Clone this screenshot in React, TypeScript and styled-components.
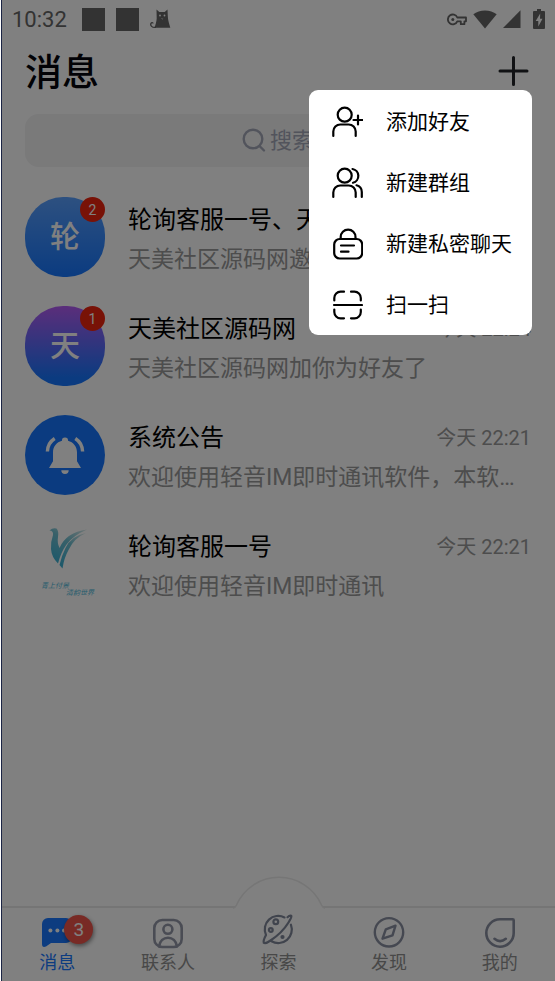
import React from 'react';
import styled, { createGlobalStyle } from 'styled-components';

const GlobalStyle = createGlobalStyle`
  *, *::before, *::after { box-sizing: border-box; }
  body {
    margin: 0;
    background: #fff;
    font-family: Roboto, "Noto Sans CJK SC", sans-serif;
  }
  button, input { font: inherit; color: inherit; }
  button { border: 0; padding: 0; background: none; cursor: pointer; }
`;

const Page = styled.div`
  position: relative;
  display: flex;
  flex-direction: column;
  min-height: 100vh;
  margin-left: 1px;
  border-left: 1px solid #1b2444;
  background: #fff;
`;

const StatusBar = styled.div`
  display: flex;
  align-items: center;
  justify-content: space-between;
  height: 38px;
  padding: 0 10px;
  color: #666;
`;

const StatusGroup = styled.div<{ $gap: number }>`
  display: flex;
  align-items: center;
  gap: ${(p) => p.$gap}px;
`;

const Clock = styled.span`
  margin-right: 4px;
  padding-top: 2px;
  font-size: 22px;
  line-height: 26px;
`;

const Square = styled.span`
  width: 23px;
  height: 23px;
  background: #666;
`;

const Header = styled.header`
  display: flex;
  align-items: center;
  justify-content: space-between;
  height: 68px;
  padding: 0 24px 2px 23px;
`;

const Heading = styled.h1`
  margin: 0;
  padding-top: 6px;
  font-size: 37px;
  line-height: 48px;
  font-weight: 500;
  color: #05050c;
`;

const AddButton = styled.button`
  display: flex;
  padding: 2px;
  color: #222428;
`;

const SearchBox = styled.label`
  display: flex;
  align-items: center;
  justify-content: center;
  gap: 4px;
  height: 53px;
  margin: 8px 24px 30px 23px;
  border-radius: 14px;
  background: #f3f3f4;
  color: #a4a8b8;
`;

const SearchInput = styled.input`
  width: 44px;
  height: 32px;
  padding: 0;
  border: 0;
  outline: 0;
  background: transparent;
  font-size: 22px;
  &::placeholder { color: #a4a8b8; opacity: 1; }
`;

const List = styled.ul`
  flex: 1;
  display: flex;
  flex-direction: column;
  gap: 29px;
  margin: 0;
  padding: 0 24px 24px 23px;
  list-style: none;
`;

const Row = styled.li`
  display: flex;
  gap: 23px;
`;

const Avatar = styled.div<{ $fill: string; $radius: number }>`
  position: relative;
  flex: none;
  display: flex;
  align-items: center;
  justify-content: center;
  width: 80px;
  height: 80px;
  border-radius: ${(p) => p.$radius}px;
  background: ${(p) => p.$fill};
  color: #fff;
  font-size: 30px;
  line-height: 40px;
  font-weight: 500;
`;

const UnreadBadge = styled.span`
  position: absolute;
  top: 0;
  right: 0;
  width: 25px;
  height: 25px;
  border-radius: 50%;
  background: #f0240f;
  font-size: 14px;
  line-height: 26px;
  font-weight: 400;
  text-align: center;
`;

const RowBody = styled.div`
  flex: 1;
  min-width: 0;
  display: flex;
  flex-direction: column;
  gap: 6px;
  padding-top: 6px;
`;

const RowTop = styled.div`
  display: flex;
  align-items: center;
  justify-content: space-between;
  gap: 12px;
`;

const Name = styled.span`
  overflow: hidden;
  text-overflow: ellipsis;
  white-space: nowrap;
  font-size: 24px;
  line-height: 34px;
  color: #000;
`;

const Time = styled.time`
  flex: none;
  font-size: 20px;
  line-height: 34px;
  color: #999;
`;

const Preview = styled.span`
  overflow: hidden;
  text-overflow: ellipsis;
  white-space: nowrap;
  font-size: 23px;
  line-height: 34px;
  color: #999;
`;

const TabBar = styled.nav`
  position: relative;
  display: flex;
  padding: 8px 0 6px;
  border-top: 2px solid #e9e9e9;
`;

const Bulge = styled.svg`
  position: absolute;
  left: 50%;
  bottom: 100%;
  margin: 0 0 -1px -46px;
`;

const Tab = styled.button<{ $active?: boolean }>`
  flex: 1;
  display: flex;
  flex-direction: column;
  align-items: center;
  gap: 3px;
  font-size: 18px;
  line-height: 24px;
  color: ${(p) => (p.$active ? '#1a78ff' : '#8f8f8f')};
`;

const TabIcon = styled.span<{ $color: string }>`
  position: relative;
  display: flex;
  color: ${(p) => p.$color};
  svg { overflow: visible; }
`;

const TabBadge = styled.span`
  position: absolute;
  top: -1px;
  left: 25px;
  width: 29px;
  height: 29px;
  border-radius: 50%;
  background: #f0544a;
  box-shadow: 1px 2px 4px rgba(0, 0, 0, 0.45);
  color: #fff;
  font-size: 19px;
  line-height: 30px;
  text-align: center;
`;

const Backdrop = styled.div`
  position: absolute;
  inset: 0;
  background: rgba(0, 0, 0, 0.498);
`;

const Menu = styled.div`
  position: absolute;
  top: 90px;
  right: 23px;
  display: flex;
  flex-direction: column;
  min-width: 223px;
  padding-top: 1px;
  border-radius: 9px;
  background: #fff;
`;

const MenuItem = styled.button`
  display: flex;
  align-items: center;
  gap: 23px;
  padding: 15px 16px 14px 22px;
  font-size: 21px;
  line-height: 32px;
  color: #000;
  white-space: nowrap;
`;

const StrokeIcon = ({ w, h, sw = 2.4, children }: {
  w: number; h: number; sw?: number; children: React.ReactNode;
}) => (
  <svg width={w} height={h} viewBox={`0 0 ${w} ${h}`} fill="none" stroke="currentColor"
    strokeWidth={sw} strokeLinecap="round" strokeLinejoin="round" aria-hidden="true">
    {children}
  </svg>
);

const CatIcon = () => (
  <svg width="21" height="20" viewBox="0 0 21 20" aria-hidden="true">
    <path fill="currentColor" d="M6.500 .5l2.800 2.500h5.400L17.500 .5l.3 6.500c0 4 1.500 8 2.500 11.800H4.500c1-3 2-6.300 2.200-9.300z" />
    <path d="M6 18.300C2 19 0 16.500 1 14.300c.6-1 2-.8 2 .3" fill="none" stroke="currentColor" strokeWidth="1.300" />
    <circle cx="10" cy="6.500" r=".9" fill="#fff" />
    <circle cx="14.500" cy="6.500" r=".9" fill="#fff" />
    <path d="M11.500 9.500l.8.500.8-.5" stroke="#fff" strokeWidth=".6" fill="none" />
  </svg>
);

const KeyIcon = () => (
  <svg width="20" height="13" viewBox="0 0 20 13" fill="none" stroke="currentColor" strokeWidth="1.800"
    strokeLinejoin="round" aria-hidden="true">
    <path d="M10.300 4.500H19v3.800h-1.600v2.900h-3.600V8.300h-3.500A4.900 4.900 0 1 1 10.300 4.500z" />
    <circle cx="5.800" cy="6.400" r="1.500" fill="currentColor" stroke="none" />
  </svg>
);

const WifiIcon = () => (
  <svg width="24" height="19" viewBox="0 0 24 19" aria-hidden="true">
    <path fill="currentColor" d="M12 18.500L.3 4.300C3.500 1.800 7.500.5 12 .5s8.500 1.300 11.700 3.800z" />
  </svg>
);

const SignalIcon = () => (
  <svg width="18" height="18" viewBox="0 0 18 18" aria-hidden="true">
    <path fill="currentColor" d="M17.500.3V18H0z" />
  </svg>
);

const BatteryIcon = () => (
  <svg width="12" height="20" viewBox="0 0 12 20" aria-hidden="true">
    <path fill="currentColor" d="M4 0h4v2h3a1 1 0 0 1 1 1v16a1 1 0 0 1-1 1H1a1 1 0 0 1-1-1V3a1 1 0 0 1 1-1h3z" />
    <path fill="#fff" d="M7.200 4.500L2.700 12h2.600v5.500L9.500 9.800H7z" />
  </svg>
);

const BellIcon = () => (
  <svg width="40" height="40" viewBox="0 0 40 40" aria-hidden="true">
    <path fill="#fff" d="M20 2.500a3 3 0 0 1 3 3.200c5.400 1.300 9 6 9 11.500v9l4 6.800H4l4-6.800v-9c0-5.500 3.600-10.200 9-11.500a3 3 0 0 1 3-3.200zM16.300 35.300h7.400a3.700 3.700 0 0 1-7.400 0z" />
    <path d="M9.700 3.500C5 6.500 2.600 11 2.400 16.500M30.300 3.500c4.700 3 7.100 7.500 7.300 13" fill="none" stroke="#fff" strokeWidth="3.400" />
  </svg>
);

const BirdLogo = () => (
  <svg width="80" height="80" viewBox="0 0 80 80" role="img" aria-label="轮询客服一号">
    <defs>
      <linearGradient id="bird" x1="0.300" y1="1" x2="0.900" y2="0">
        <stop offset="0" stopColor="#3fb2d4" />
        <stop offset=".55" stopColor="#6fc0d2" />
        <stop offset="1" stopColor="#d4e8e8" />
      </linearGradient>
    </defs>
    <g fill="url(#bird)">
      <path d="M24.500 6.500Q28 3.200 31.500 4.500Q34 7 33 13Q32 19 34.500 24Q41 8.500 62 5.500Q48 11.500 41.500 20.500Q36 28 33 39.500Q26.500 33 26 25Q25.500 18 28 11Q28.500 6.500 24.500 6.500Z" />
      <path d="M61 9Q46 12 40.500 24Q36.500 32 34.500 41L37.500 44.500Q39 34 43.500 26Q49 14 61 9Z" />
    </g>
    <g fill="#4fbadb" fontSize="7" fontStyle="italic" fontWeight="400">
      <text x="16" y="64">青上付景</text>
      <text x="41" y="71">清韵世界</text>
    </g>
  </svg>
);

const chats = [
  {
    name: '轮询客服一号、天美社区源码网', preview: '天美社区源码网邀请你加入群聊', time: '今天 22:25',
    fill: 'linear-gradient(#5ba0ff, #1677ff)', radius: 38, mark: '轮', unread: 2,
  },
  {
    name: '天美社区源码网', preview: '天美社区源码网加你为好友了', time: '今天 22:24',
    fill: 'linear-gradient(#b55cf5, #1677ff 90%)', radius: 38, mark: '天', unread: 1,
  },
  {
    name: '系统公告', preview: '欢迎使用轻音IM即时通讯软件，本软件提供安全的聊天服务', time: '今天 22:21',
    fill: '#1677ff', radius: 40, mark: <BellIcon />,
  },
  {
    name: '轮询客服一号', preview: '欢迎使用轻音IM即时通讯', time: '今天 22:21',
    fill: 'transparent', radius: 0, mark: <BirdLogo />,
  },
];

const menuItems = [
  {
    label: '添加好友',
    icon: (
      <>
        <circle cx="13.700" cy="8.700" r="7" />
        <path d="M2.300 30v-4.500a7 7 0 0 1 7-7h8.400a7 7 0 0 1 7 7V30M27 9.500v9M22.500 14h9" />
      </>
    ),
  },
  {
    label: '新建群组',
    icon: (
      <>
        <circle cx="13.700" cy="8.700" r="7" />
        <path d="M2.300 30v-4.500a7 7 0 0 1 7-7h8.400a7 7 0 0 1 7 7V30M21.500 2a7 7 0 0 1 .5 13.700M25.500 18.300a7 7 0 0 1 5.300 6.700v5" />
      </>
    ),
  },
  {
    label: '新建私密聊天',
    icon: (
      <>
        <rect x="3.200" y="11" width="28" height="19.500" rx="5.500" />
        <path d="M9.700 10.500V9a7.400 7.400 0 0 1 14.800 0v1.500M10 17.500h13M10 23.700h7.500" />
      </>
    ),
  },
  {
    label: '扫一扫',
    icon: (
      <path d="M3.300 11.500V9a6.300 6.300 0 0 1 6.300-6.300H13M20 2.700h3.500A6.300 6.300 0 0 1 29.800 9v2.500M3.300 20.500V23a6.300 6.300 0 0 0 6.300 6.300H13M20 29.300h3.500a6.300 6.300 0 0 0 6.300-6.300v-2.500M3 16h28" />
    ),
  },
];

export default function App() {
  return (
    <>
      <GlobalStyle />
      <Page>
        <StatusBar>
          <StatusGroup $gap={11}>
            <Clock>10:32</Clock>
            <Square />
            <Square />
            <CatIcon />
          </StatusGroup>
          <StatusGroup $gap={12}>
            <StatusGroup $gap={6}>
              <KeyIcon />
              <WifiIcon />
              <SignalIcon />
            </StatusGroup>
            <BatteryIcon />
          </StatusGroup>
        </StatusBar>

        <Header>
          <Heading>消息</Heading>
          <AddButton aria-label="添加">
            <StrokeIcon w={32} h={32} sw={3}>
              <path d="M16.500 2.500v27M3 16h27" />
            </StrokeIcon>
          </AddButton>
        </Header>

        <SearchBox>
          <StrokeIcon w={24} h={26} sw={2.4}>
            <circle cx="11" cy="11" r="9.300" />
            <path d="M17.500 18l4.500 4.500" />
          </StrokeIcon>
          <SearchInput type="text" placeholder="搜索" aria-label="搜索" />
        </SearchBox>

        <List>
          {chats.map((c, i) => (
            <Row key={i}>
              <Avatar $fill={c.fill} $radius={c.radius}>
                {c.mark}
                {c.unread && <UnreadBadge>{c.unread}</UnreadBadge>}
              </Avatar>
              <RowBody>
                <RowTop>
                  <Name>{c.name}</Name>
                  <Time>{c.time}</Time>
                </RowTop>
                <Preview>{c.preview}</Preview>
              </RowBody>
            </Row>
          ))}
        </List>

        <TabBar>
          <Bulge width="92" height="34" viewBox="0 0 92 34" aria-hidden="true">
            <path d="M1.500 34Q3 31.500 4.500 28A46 46 0 0 1 87.500 28Q89 31.500 90.500 34z" fill="#fff" />
            <path d="M0 33Q2 33 3.500 30A46.500 46.500 0 0 1 88.500 30Q90 33 92 33" fill="none" stroke="#ebebeb" strokeWidth="1.500" />
          </Bulge>
          <Tab $active>
            <TabIcon $color="#1a78ff">
              <svg width="36" height="32" viewBox="0 0 36 32" aria-hidden="true">
                <path fill="currentColor" d="M9 2h18a6 6 0 0 1 6 6v13a6 6 0 0 1-6 6H12l-5 3.500Q3 32 3 28V8a6 6 0 0 1 6-6z" />
                <g fill="#fff">
                  <circle cx="11.400" cy="14.500" r="2" />
                  <circle cx="18.400" cy="14.500" r="2" />
                  <circle cx="25" cy="14.500" r="2" />
                </g>
              </svg>
              <TabBadge>3</TabBadge>
            </TabIcon>
            消息
          </Tab>
          <Tab>
            <TabIcon $color="#9398a8">
              <StrokeIcon w={36} h={32} sw={2.6}>
                <rect x="4.300" y="4" width="27.400" height="27" rx="8" />
                <circle cx="17.900" cy="13.300" r="4.500" />
                <path d="M9 30.500c.8-5.500 4.600-8.800 9-8.800s8.200 3.300 9 8.800" />
              </StrokeIcon>
            </TabIcon>
            联系人
          </Tab>
          <Tab>
            <TabIcon $color="#80879a">
              <StrokeIcon w={36} h={32} sw={2.2}>
                <path d="M24.500 1.400A13.500 13.500 0 0 0 6 19Q3 24.500 3.800 26.800Q6 27.800 10.500 24.500Q22 17 28.500 6.500Q32 1 31.300-.2Q29.500-.8 27.500 1.200M30.900 8.700A13.500 13.500 0 0 1 11.500 25.200" />
                <circle cx="15.800" cy="5.800" r="2.400" />
                <circle cx="10.800" cy="14" r="1.900" />
                <circle cx="22.500" cy="21" r="1" fill="currentColor" />
              </StrokeIcon>
            </TabIcon>
            探索
          </Tab>
          <Tab>
            <TabIcon $color="#8a90a2">
              <StrokeIcon w={36} h={32} sw={2.4}>
                <circle cx="18" cy="16.300" r="14.200" />
                <path d="M24.500 9.700L14.800 13.300L11.500 22.700L21.500 19.300Z" />
              </StrokeIcon>
            </TabIcon>
            发现
          </Tab>
          <Tab>
            <TabIcon $color="#8a90a2">
              <StrokeIcon w={36} h={32} sw={2.6}>
                <path d="M18 3.300h12.700a1 1 0 0 1 1 1V17A13.700 13.700 0 1 1 18 3.300zM12.500 22.800q5.500 4.500 11.300 0" />
              </StrokeIcon>
            </TabIcon>
            我的
          </Tab>
        </TabBar>

        <Backdrop />
        <Menu role="menu">
          {menuItems.map((m) => (
            <MenuItem key={m.label} role="menuitem">
              <StrokeIcon w={32} h={32} sw={2.2}>{m.icon}</StrokeIcon>
              {m.label}
            </MenuItem>
          ))}
        </Menu>
      </Page>
    </>
  );
}
